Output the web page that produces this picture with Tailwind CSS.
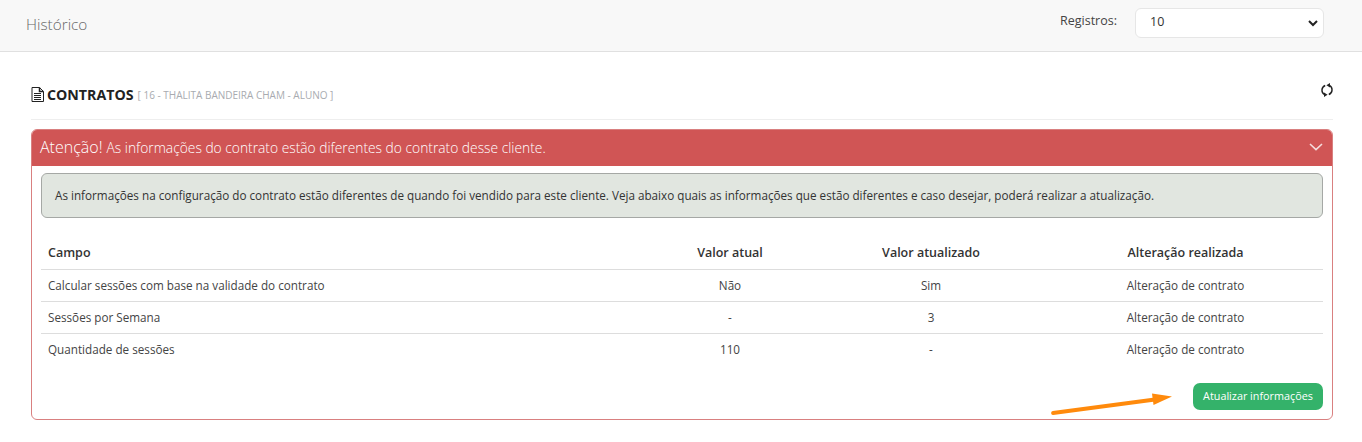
<!DOCTYPE html>
<html lang="pt-BR">
<head>
    <meta charset="UTF-8">
    <title>Histórico</title>
    <script src="https://cdn.jsdelivr.net/npm/@tailwindcss/browser@4"></script>
</head>
<body class="bg-white font-['Open_Sans',sans-serif] text-[#333] overflow-hidden">

<div class="relative h-[442px] w-[1362px]">
    <!-- topo -->
    <div class="h-[52px] bg-[#f8f8f8] border-b border-[#e0e0e0] flex items-center justify-between pl-[26px] pr-[38px]">
        <span class="text-[15.3px] font-light text-[#666] relative top-[-1px]">Histórico</span>
        <div class="flex items-center gap-[18px] relative top-[-3px]">
            <span class="text-[12.5px] text-[#444] relative top-[-1px]">Registros:</span>
            <div class="w-[189px] h-[30px] bg-white border border-[#e6e6e6] rounded-[6px] flex items-center justify-between pl-[14px] pr-[4px] text-[12.5px] text-[#333]">
                <span>10</span>
                <svg class="w-[12px] h-[12px]" viewBox="0 0 12 12" fill="none" stroke="#222" stroke-width="2"><path d="M2 4l4 4 4-4"/></svg>
            </div>
        </div>
    </div>

    <div class="pl-[31px] pr-[29px]">
        <!-- titulo -->
        <div class="h-[68px] border-b border-[#eee] flex items-start justify-between pt-[32px]">
            <div class="flex items-center">
                <svg class="w-[13px] h-[15px] mr-[3px]" viewBox="0 0 13 15" fill="none" stroke="#222" stroke-width="1">
                    <path d="M1 .5h7.5l4 4v10H1z"/><path d="M8.5.5v4h4" stroke-width="1.5"/><path d="M3 6.5h7M3 8.5h7M3 10.5h7M3 12.5h7"/>
                </svg>
                <span class="text-[14.2px] font-bold text-[#222]">CONTRATOS</span>
                <span class="text-[10px] text-[#a8abb0] ml-[4px] mt-[2px]">[ 16 - THALITA BANDEIRA CHAM - ALUNO ]</span>
            </div>
            <svg class="w-[14px] h-[14px] mr-[-1px] mt-[-1px]" viewBox="0 0 14 14" fill="none" stroke="#222" stroke-width="1.4">
                <path d="M5.200 2.500A5 5 0 0 0 4.600 11.600"/><path d="M8.800 11.500A5 5 0 0 0 9.400 2.400"/>
                <path d="M10 0L6.400 2.200L10 4.400z" fill="#222" stroke="none"/><path d="M4 9.600L7.600 11.800L4 14z" fill="#222" stroke="none"/>
            </svg>
        </div>

        <!-- card -->
        <div class="mt-[9px] h-[291px] w-[1302px] border border-[#d98080] rounded-[6px] overflow-hidden">
            <div class="h-[37px] bg-[#d05555] mx-[-1px] mt-[-1px] flex items-center justify-between pl-[9px] pr-[10px] pb-[2px] text-white">
                <div class="flex items-baseline gap-[4px]">
                    <span class="text-[16px] font-light">Atenção!</span>
                    <span class="text-[13.8px] font-light">As informações do contrato estão diferentes do contrato desse cliente.</span>
                </div>
                <svg class="w-[14px] h-[8px]" viewBox="0 0 14 8" fill="none" stroke="#f5dcdc" stroke-width="1.6"><path d="M1 1l6 5.600L13 1"/></svg>
            </div>

            <div class="px-[9px] pt-[7px]">
                <div class="h-[45px] bg-[#e1e6e0] border border-[#a5a8a5] rounded-[6px] flex items-center pl-[13px] text-[11.7px] text-[#333]">
                    As informações na configuração do contrato estão diferentes de quando foi vendido para este cliente. Veja abaixo quais as informações que estão diferentes e caso desejar, poderá realizar a atualização.
                </div>

                <table class="w-[1282px] mt-[19px] table-fixed text-[11.7px] text-[#444]">
                    <colgroup>
                        <col class="w-[605px]"><col class="w-[168px]"><col class="w-[234px]"><col class="w-[275px]">
                    </colgroup>
                    <thead>
                        <tr class="h-[32px] border-b border-[#ddd] text-[12.5px] text-[#333]">
                            <th class="font-semibold text-left pl-[7px] pt-[1px]">Campo</th>
                            <th class="font-semibold text-center pt-[1px]">Valor atual</th>
                            <th class="font-semibold text-center pt-[1px]">Valor atualizado</th>
                            <th class="font-semibold text-center pt-[1px]">Alteração realizada</th>
                        </tr>
                    </thead>
                    <tbody>
                        <tr class="h-[32px] border-b border-[#ddd]">
                            <td class="pl-[7px] pt-[1px]">Calcular sessões com base na validade do contrato</td>
                            <td class="text-center pt-[1px]">Não</td>
                            <td class="text-center pt-[1px]">Sim</td>
                            <td class="text-center pt-[1px]">Alteração de contrato</td>
                        </tr>
                        <tr class="h-[32px] border-b border-[#ddd]">
                            <td class="pl-[7px] pt-[1px]">Sessões por Semana</td>
                            <td class="text-center pt-[1px]">-</td>
                            <td class="text-center pt-[1px]">3</td>
                            <td class="text-center pt-[1px]">Alteração de contrato</td>
                        </tr>
                        <tr class="h-[32px]">
                            <td class="pl-[7px] pt-[1px]">Quantidade de sessões</td>
                            <td class="text-center pt-[1px]">110</td>
                            <td class="text-center pt-[1px]">-</td>
                            <td class="text-center pt-[1px]">Alteração de contrato</td>
                        </tr>
                    </tbody>
                </table>

                <div class="flex justify-end mt-[18px]">
                    <button class="w-[130px] h-[27px] bg-[#34b26a] text-white text-[10.8px] rounded-[7px]">Atualizar informações</button>
                </div>
            </div>
        </div>
    </div>

    <!-- seta de anotacao -->
    <svg class="absolute left-[1050px] top-[390px] w-[126px] h-[26px]" viewBox="0 0 126 26" fill="none">
        <path d="M3 23L105 9.500" stroke="#ff8a0c" stroke-width="3.800" stroke-linecap="round"/>
        <path d="M102 3.500L122 6.500L103.500 15Z" fill="#ff8a0c"/>
    </svg>
</div>

</body>
</html>
